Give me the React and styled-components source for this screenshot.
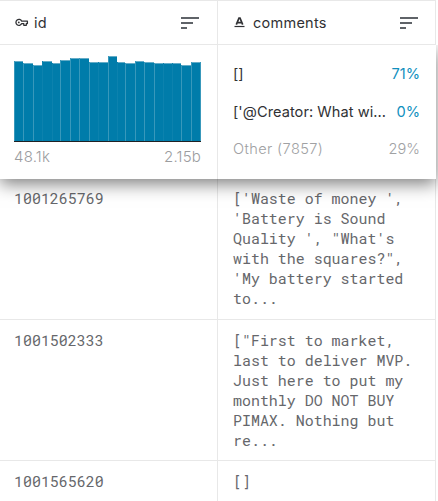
import React from "react";
import styled, { createGlobalStyle } from "styled-components";
import { MdSort } from "react-icons/md";

const GlobalStyle = createGlobalStyle`
  *, *::before, *::after { box-sizing: border-box; }
  body { margin: 0; background: #fff; overflow: hidden; font-family: Inter, "Liberation Sans", sans-serif; }
`;

const Table = styled.main`
  width: 436px;
  height: 501px;
  border-top: 1px solid #e8e8e8;
`;

const Columns = styled.div`
  display: grid;
  grid-template-columns: 218px 218px;
`;

const HeaderRow = styled(Columns)`
  height: 44px;
`;

const HeaderCell = styled.div`
  display: flex;
  align-items: center;
  padding: 0 ${(p) => (p.$last ? 14 : 15)}px 0 14px;
  border-right: 1px solid #e8e8e8;
  border-bottom: 1px solid #e8e8e8;
  color: #303134;
`;

const TypeIcon = styled.svg`
  flex: none;
  width: 15px;
  height: 15px;
  margin-right: ${(p) => p.$gap}px;
`;

const ColumnName = styled.span`
  flex: 1;
  font-size: 14.5px;
  line-height: 20px;
  letter-spacing: 0.25px;
`;

const SortIcon = styled(MdSort)`
  width: 24px;
  height: 24px;
  color: #5f6368;
`;

const StatsRow = styled(Columns)`
  position: relative;
  height: 134px;
  background: #fff;
  box-shadow: 0 5px 16px rgba(0, 0, 0, 0.5);
  clip-path: inset(0 -10px -30px -10px);
`;

const StatsCell = styled.div`
  min-width: 0;
  padding: ${(p) => (p.$last ? "11px 15px 0 15px" : "10px 16px 0 14px")};
  border-right: 1px solid ${(p) => (p.$last ? "transparent" : "#e8e8e8")};
`;

const Chart = styled.svg`
  display: block;
  width: 187px;
  height: 87px;
`;

const RangeLabels = styled.div`
  display: flex;
  justify-content: space-between;
  margin-top: 5px;
  font-size: 15px;
  font-weight: 300;
  line-height: 20px;
  letter-spacing: 0.2px;
  color: #9c9d9f;
`;

const Summary = styled.div`
  display: flex;
  justify-content: space-between;
  height: 37.5px;
  padding-top: 8px;
  font-size: 14.6px;
  line-height: 20px;
  color: ${(p) => (p.$muted ? "#a0a1a3" : "#303134")};
  font-weight: ${(p) => (p.$muted ? 300 : 400)};
  letter-spacing: ${(p) => (p.$muted ? 0.38 : 0.05)}px;
`;

const SummaryName = styled.span`
  width: 156px;
  white-space: nowrap;
`;

const Percent = styled.span`
  letter-spacing: 0;
  color: ${(p) => (p.$muted ? "#a0a1a3" : "#108fbe")};
`;

const DataRow = styled(Columns)`
  height: ${(p) => p.$height}px;
`;

const DataCell = styled.div`
  padding: 10px 0 0 ${(p) => (p.$text ? 15 : 14)}px;
  border-right: 1px solid #e8e8e8;
  border-bottom: 1px solid #e8e8e8;
  font-family: "Roboto Mono", "Liberation Mono", monospace;
  font-size: 14.95px;
  line-height: 20px;
  color: #66676b;
  white-space: pre;

  ${DataRow}:nth-child(3) & { padding-top: 9px; }
`;

const bars = [
  [14, 61], [23, 63], [33, 65], [42, 61], [52, 63], [60, 60], [70, 58],
  [79, 58], [89, 62], [98, 62], [108, 56], [117, 62], [125, 63], [135, 61],
  [144, 62], [154, 63], [163, 63], [172, 63], [181, 65], [191, 62],
];

const rows = [
  { id: "1001265769", height: 141, comments: "['Waste of money ',\n'Battery is Sound\nQuality ', \"What's\nwith the squares?\",\n'My battery started\nto..." },
  { id: "1001502333", height: 141, comments: "[\"First to market,\nlast to deliver MVP.\nJust here to put my\nmonthly DO NOT BUY\nPIMAX. Nothing but\nre..." },
  { id: "1001565620", height: 60, comments: "[]" },
];

const faintEdges = [42, 52, 98, 117, 163, 172];

function KeyIcon() {
  return (
    <TypeIcon $gap={5} viewBox="0 0 15 15" fill="none" stroke="#303134" strokeWidth="1.3">
      <path d="M7.7 6.2H13.4V8.6H12.3V10.3H9.8V8.6H7.7A3 3 0 1 1 7.7 6.2Z" strokeLinejoin="round" />
      <circle cx="4.8" cy="7.4" r="0.9" fill="#303134" stroke="none" />
    </TypeIcon>
  );
}

function TextTypeIcon() {
  return (
    <TypeIcon $gap={6} viewBox="0 0 15 15" fill="none" stroke="#303134">
      <path d="M4.3 9.6L7 3H8L10.7 9.6M5.3 7.6H9.7" strokeWidth="1.7" />
      <path d="M2.5 11.5H12.5" strokeWidth="1.2" />
    </TypeIcon>
  );
}

function Histogram() {
  return (
    <Chart viewBox="14 55 187 87" shapeRendering="crispEdges">
      {bars.map(([x, y], i) => {
        const end = i < bars.length - 1 ? bars[i + 1][0] : 201;
        return (
          <g key={x}>
            <rect x={x} y={y} width={end - x} height={141 - y} fill="#007caa" />
            <rect x={x} y={y} width={end - x} height="1" fill="#65acc7" />
            <rect x={x} y={y} width="1" height={141 - y} fill={faintEdges.includes(x) ? "#0c82ae" : "#3898bb"} />
          </g>
        );
      })}
      <rect x="200" y="62" width="1" height="79" fill="#3898bb" />
      <rect x="14" y="141" width="187" height="1" fill="#202124" />
    </Chart>
  );
}

export default function App() {
  return (
    <>
      <GlobalStyle />
      <Table>
        <HeaderRow>
          <HeaderCell>
            <KeyIcon />
            <ColumnName>id</ColumnName>
            <SortIcon />
          </HeaderCell>
          <HeaderCell $last>
            <TextTypeIcon />
            <ColumnName>comments</ColumnName>
            <SortIcon />
          </HeaderCell>
        </HeaderRow>
        <StatsRow>
          <StatsCell>
            <Histogram />
            <RangeLabels><span>48.1k</span><span>2.15b</span></RangeLabels>
          </StatsCell>
          <StatsCell $last>
            <Summary><SummaryName>[]</SummaryName><Percent>71%</Percent></Summary>
            <Summary><SummaryName>['@Creator: What wi...</SummaryName><Percent>0%</Percent></Summary>
            <Summary $muted><SummaryName>Other (7857)</SummaryName><Percent $muted>29%</Percent></Summary>
          </StatsCell>
        </StatsRow>
        {rows.map((row) => (
          <DataRow key={row.id} $height={row.height}>
            <DataCell>{row.id}</DataCell>
            <DataCell $text>{row.comments}</DataCell>
          </DataRow>
        ))}
      </Table>
    </>
  );
}
